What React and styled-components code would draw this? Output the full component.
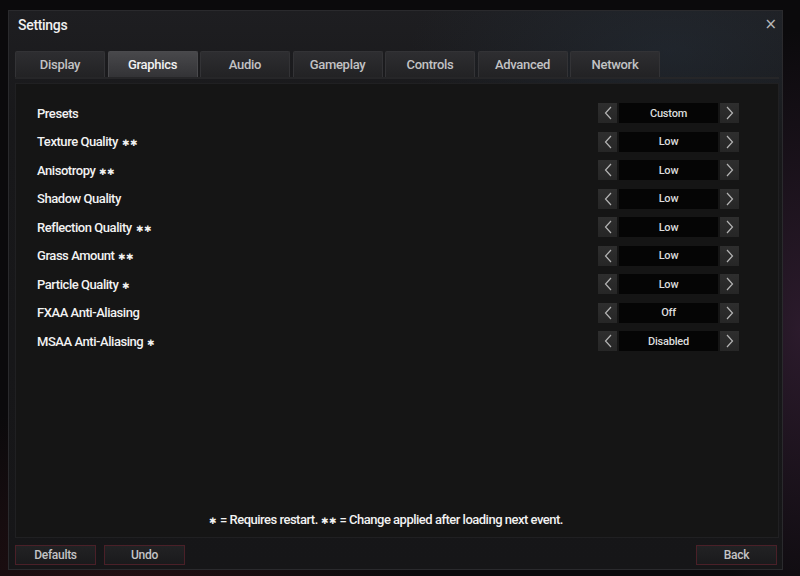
import React from "react";
import styled, { createGlobalStyle } from "styled-components";

const Global = createGlobalStyle`
  html, body { margin: 0; padding: 0; }
  body {
    width: 800px; height: 576px; overflow: hidden;
    background:
      radial-gradient(ellipse 120px 300px at 800px 330px, rgba(70,40,70,0.55), transparent),
      radial-gradient(ellipse 300px 200px at 120px 600px, rgba(60,20,25,0.5), transparent),
      #0b0a0c;
    font-family: Roboto, "Liberation Sans", sans-serif;
  }
  #root { width: 800px; height: 576px; }
`;

const Page = styled.div`
  width: 800px;
  height: 576px;
  padding: 10px 17px 6px 8px;
  box-sizing: border-box;
  display: flex;
`;

const Window = styled.div`
  flex: 1;
  display: flex;
  flex-direction: column;
  box-sizing: border-box;
  padding: 0 3px 0 6px;
  border: 1px solid #2a2a2d;
  background:
    radial-gradient(ellipse 260px 120px at 660px 40px, rgba(40,55,70,0.35), transparent),
    linear-gradient(#1e1e21, #18181a 20%, #161618);
  position: relative;
`;

const TitleBar = styled.div`
  height: 40px;
  display: flex;
  align-items: center;
  padding-left: 3px;
  padding-bottom: 13px;
  box-sizing: border-box;
`;

const Title = styled.div`
  color: #f0f0f0;
  font-size: 14px;
  font-weight: 500;
  letter-spacing: -0.3px;
`;

const Close = styled.div`
  position: absolute;
  right: 5px;
  top: 4px;
  color: #b8b8b8;
  font-size: 15px;
  font-family: "DejaVu Sans", sans-serif;
`;

const Tabs = styled.div`
  display: flex;
  gap: 2.5px;
  height: 26px;
  border-bottom: 2px solid #262628;
`;

const Tab = styled.div`
  width: 90px;
  display: flex;
  align-items: center;
  justify-content: center;
  font-size: 13px;
  font-weight: 500;
  letter-spacing: -0.3px;
  color: ${p => (p.$active ? "#f2f2f2" : "#c2c2c4")};
  border: 1px solid ${p => (p.$active ? "#4a4a4d" : "#333336")};
  border-bottom: none;
  border-radius: 2px 2px 0 0;
  background: ${p =>
    p.$active
      ? "linear-gradient(#48484b, #333336)"
      : "linear-gradient(#2e2e31, #222224)"};
  box-sizing: border-box;
`;

const Panel = styled.div`
  margin-top: 4px;
  height: 455px;
  background: #151515;
  border: 1px solid #202022;
  box-sizing: border-box;
  padding: 15px 39px 10px 21px;
  display: flex;
  flex-direction: column;
`;

const Row = styled.div`
  height: 28.5px;
  display: flex;
  align-items: center;
  justify-content: space-between;
`;

const Label = styled.div`
  color: #f2f2f2;
  font-size: 13px;
  font-weight: 500;
  letter-spacing: -0.45px;
`;

const Star = styled.span`
  font-size: 9px;
  margin-left: ${p => (p.$lead ? "0" : "4px")};
  margin-right: ${p => (p.$lead ? "3px" : "0")};
  letter-spacing: 0;
`;

const Selector = styled.div`
  display: flex;
  gap: 2px;
  height: 20px;
`;

const ArrowBtn = styled.div`
  width: 19px;
  background: linear-gradient(#2e2e2e, #262626);
  display: flex;
  align-items: center;
  justify-content: center;
`;

const Value = styled.div`
  width: 99px;
  background: #050505;
  color: #dcdcdc;
  font-size: 11px;
  font-weight: 500;
  display: flex;
  align-items: center;
  justify-content: center;
  letter-spacing: -0.2px;
`;

const Spacer = styled.div`
  flex: 1;
`;

const Note = styled.div`
  text-align: center;
  color: #f2f2f2;
  font-size: 13px;
  font-weight: 500;
  letter-spacing: -0.5px;
  margin-left: -4px;
`;

const Footer = styled.div`
  display: flex;
  align-items: center;
  padding-top: 7px;
  gap: 8px;
`;

const Btn = styled.div`
  width: 81px;
  height: 20px;
  box-sizing: border-box;
  border: 1px solid #4a2028;
  background: linear-gradient(#222224, #1a1a1c);
  color: #c4c4c6;
  font-size: 12px;
  font-weight: 500;
  letter-spacing: -0.3px;
  display: flex;
  align-items: center;
  justify-content: center;
  margin-left: ${p => (p.$right ? "auto" : "0")};
  margin-right: ${p => (p.$right ? "2px" : "0")};
`;

const Chevron = ({ dir }) => (
  <svg width="8" height="14" viewBox="0 0 8 14">
    <path
      d={dir === "left" ? "M7 1 L1.5 7 L7 13" : "M1 1 L6.5 7 L1 13"}
      fill="none"
      stroke="#b4b4b4"
      strokeWidth="1.2"
    />
  </svg>
);

const tabs = ["Display", "Graphics", "Audio", "Gameplay", "Controls", "Advanced", "Network"];

const settings = [
  ["Presets", "", "Custom"],
  ["Texture Quality", "**", "Low"],
  ["Anisotropy", "**", "Low"],
  ["Shadow Quality", "", "Low"],
  ["Reflection Quality", "**", "Low"],
  ["Grass Amount", "**", "Low"],
  ["Particle Quality", "*", "Low"],
  ["FXAA Anti-Aliasing", "", "Off"],
  ["MSAA Anti-Aliasing", "*", "Disabled"],
];

export default function App() {
  return (
    <>
      <Global />
      <Page>
        <Window>
          <TitleBar>
            <Title>Settings</Title>
          </TitleBar>
          <Close>×</Close>
          <Tabs>
            {tabs.map(t => (
              <Tab key={t} $active={t === "Graphics"}>{t}</Tab>
            ))}
          </Tabs>
          <Panel>
            {settings.map(([label, star, value]) => (
              <Row key={label}>
                <Label>
                  {label}
                  {star && <Star>{star.replace(/\*/g, "✱")}</Star>}
                </Label>
                <Selector>
                  <ArrowBtn><Chevron dir="left" /></ArrowBtn>
                  <Value>{value}</Value>
                  <ArrowBtn><Chevron dir="right" /></ArrowBtn>
                </Selector>
              </Row>
            ))}
            <Spacer />
            <Note>
              <Star $lead>✱</Star>= Requires restart.{" "}
              <Star $lead>✱✱</Star>= Change applied after loading next event.
            </Note>
          </Panel>
          <Footer>
            <Btn>Defaults</Btn>
            <Btn>Undo</Btn>
            <Btn $right>Back</Btn>
          </Footer>
        </Window>
      </Page>
    </>
  );
}
